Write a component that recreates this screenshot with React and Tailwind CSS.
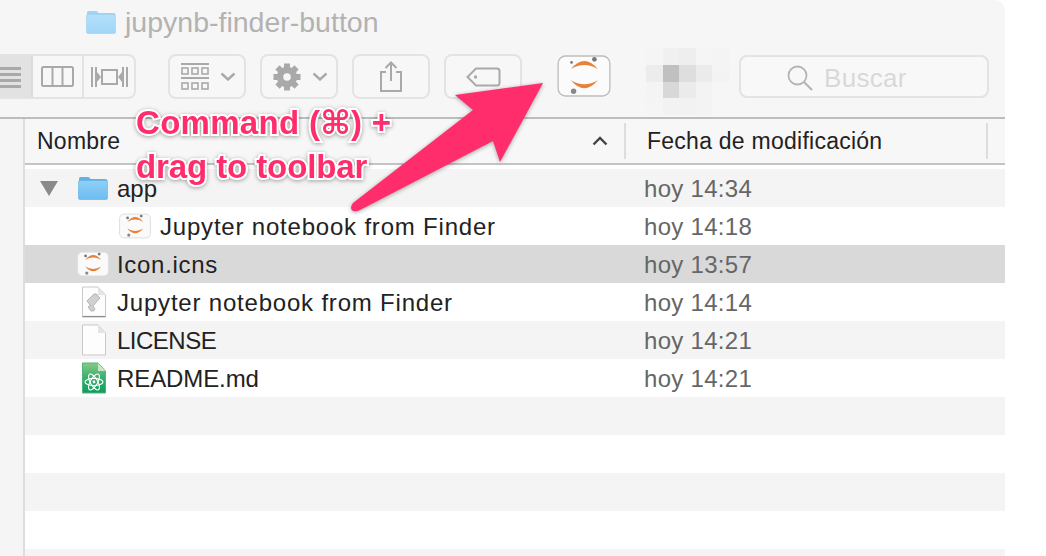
import React from 'react';

const font = { fontFamily: '"Liberation Sans", "DejaVu Sans", sans-serif' };

function Folder({ w, h, pale }) {
  const id = pale ? 'folderPale' : 'folderBlue';
  return (
    <svg width={w} height={h} viewBox="0 0 30 24">
      <defs>
        <linearGradient id={id} x1="0" y1="0" x2="0" y2="1">
          <stop offset="0" stopColor={pale ? '#b4e0fb' : '#8fd0f8'} />
          <stop offset="1" stopColor={pale ? '#a0d6f8' : '#6cbcf0'} />
        </linearGradient>
      </defs>
      <path d="M1 5V2.5Q1 1 2.5 1H10Q11.5 1 12.5 3H27.5Q29.5 3 29.5 5V5Z" fill={pale ? '#9fd3f5' : '#62b2ea'} />
      <rect x="0.5" y="4.5" width="29" height="19" rx="1.5" fill={`url(#${id})`} stroke={pale ? '#9ccff0' : '#5fade4'} strokeWidth="0.6" />
    </svg>
  );
}

function JupyterIcon({ w, h, strong }) {
  return (
    <svg width={w} height={h} viewBox="0 0 160 125" className="block">
      <rect x="3" y="3" width="154" height="119" rx="22" fill={strong ? '#fbfbfb' : '#fafafa'} stroke={strong ? '#bdbdbd' : '#dedede'} strokeWidth={strong ? 4 : 5} />
      <path d="M41 42Q81 -6 121 42Q81 18 41 42Z" fill="#e8823a" />
      <path d="M41 75Q81 123 121 75Q81 99 41 75Z" fill="#e8823a" />
      <circle cx="43" cy="22" r={strong ? 4 : 7} fill="#777" />
      <circle cx="111" cy="13" r="7" fill="#777" />
      <circle cx="49" cy="108" r="8" fill="#888" />
    </svg>
  );
}

function Page({ fill = '#fdfdfd', fold = '#e4e4e4', stroke = '#c9c9c9', children }) {
  return (
    <svg width="26" height="32" viewBox="0 0 26 32" className="block">
      <defs>
        <linearGradient id="pageGreen" x1="0" y1="0" x2="0" y2="1">
          <stop offset="0" stopColor="#86cb86" />
          <stop offset="0.45" stopColor="#3fb071" />
          <stop offset="1" stopColor="#0f9c5f" />
        </linearGradient>
      </defs>
      <path d="M1.5 1H17L24.5 9V31H1.5Z" fill={fill} stroke={stroke} strokeWidth="1" />
      <path d="M17 1L24.5 9H17Z" fill={fold} />
      {children}
    </svg>
  );
}

function ScriptDoc() {
  return (
    <Page>
      <path d="M6 15L13 8Q16 7 17 10L19 12L12 20L14 23Q13 26 10 25L7 21Q9 19 10 20Z" fill="#d0d0d0" stroke="#a8a8a8" strokeWidth="0.8" />
      <path d="M1.5 30.5H24.5" stroke="#8f8f8f" strokeWidth="1.2" />
    </Page>
  );
}

function AtomDoc() {
  return (
    <Page fill="url(#pageGreen)" fold="#c4e6c6" stroke="#4fb577">
      <g fill="none" stroke="#fff" strokeWidth="1.1">
        <ellipse cx="13" cy="20" rx="9" ry="3.6" />
        <ellipse cx="13" cy="20" rx="9" ry="3.6" transform="rotate(60 13 20)" />
        <ellipse cx="13" cy="20" rx="9" ry="3.6" transform="rotate(120 13 20)" />
      </g>
      <circle cx="13" cy="20" r="1.4" fill="#fff" />
    </Page>
  );
}

function Chevron() {
  return (
    <svg width="16" height="9" viewBox="0 0 16 9">
      <path d="M1.5 1.5L8 7.5L14.5 1.5" fill="none" stroke="#a9a9a9" strokeWidth="2.4" />
    </svg>
  );
}

function Gear() {
  const teeth = [0, 45, 90, 135, 180, 225, 270, 315];
  return (
    <svg width="28" height="28" viewBox="0 0 28 28">
      {teeth.map(a => (
        <rect key={a} x="11" y="0.5" width="6" height="7" fill="#a9a9a9" transform={`rotate(${a} 14 14)`} />
      ))}
      <circle cx="14" cy="14" r="7" fill="none" stroke="#a9a9a9" strokeWidth="6.5" />
    </svg>
  );
}

function ToolButton({ children, extra = '' }) {
  return (
    <div className={`w-[78px] h-[45px] shrink-0 flex items-center justify-center gap-[11px] rounded-[8px] border-2 border-[#e3e3e3] bg-[#f7f7f7] ${extra}`}>
      {children}
    </div>
  );
}

const mosaic = [
  'bg-[#f5f5f5]', 'bg-[#f0f0f0]', 'bg-[#eeeeee]', 'bg-[#f5f5f5]', 'bg-[#f4f4f4]',
  'bg-[#ececec]', 'bg-[#c0c0c0]', 'bg-[#dedede]', 'bg-[#ebebeb]', 'bg-[#f3f3f3]',
  'bg-[#f4f4f4]', 'bg-[#d8d8d8]', 'bg-[#ebebeb]', 'bg-[#f3f3f3]', 'bg-[#f6f6f6]',
  'bg-[#f5f5f5]', 'bg-[#f2f2f2]', 'bg-[#f2f2f2]', 'bg-[#f3f3f3]', 'bg-[#f6f6f6]',
];

const rows = [
  { name: 'app', date: 'hoy 14:34', bg: 'bg-[#f4f4f4]', pad: 'pl-[53px] gap-[9px]', icon: <Folder w={30} h={24} />, open: true },
  { name: 'Jupyter notebook from Finder', date: 'hoy 14:18', bg: 'bg-white', pad: 'pl-[94px] gap-[9px]', track: 'tracking-[0.8px]', icon: <JupyterIcon w={32} h={26} /> },
  { name: 'Icon.icns', date: 'hoy 13:57', bg: 'bg-[#d9d9d9]', pad: 'pl-[52px] gap-[8px]', track: 'tracking-[0.7px]', icon: <JupyterIcon w={32} h={26} /> },
  { name: 'Jupyter notebook from Finder', date: 'hoy 14:14', bg: 'bg-white', pad: 'pl-[56px] gap-[10px]', track: 'tracking-[0.8px]', icon: <ScriptDoc /> },
  { name: 'LICENSE', date: 'hoy 14:21', bg: 'bg-[#f4f4f4]', pad: 'pl-[56px] gap-[10px]', track: 'tracking-[-0.5px]', icon: <Page /> },
  { name: 'README.md', date: 'hoy 14:21', bg: 'bg-white', pad: 'pl-[56px] gap-[10px]', track: 'tracking-[-0.1px]', icon: <AtomDoc /> },
  { bg: 'bg-[#f4f4f4]' },
  { bg: 'bg-white' },
  { bg: 'bg-[#f4f4f4]' },
  { bg: 'bg-white' },
  { bg: 'bg-[#f4f4f4]' },
];

export default function App() {
  return (
    <div className="relative w-[1046px] h-[556px] overflow-hidden bg-white" style={font}>
      <div className="w-[1005px] h-[556px] flex flex-col overflow-hidden rounded-tr-[10px] bg-[#f6f6f6]">
        {/* barra de titulo + toolbar */}
        <div className="h-[119px] shrink-0 border-b-2 border-[#bdbdbd]">
          <div className="h-[54px] pl-[86px] flex items-start pt-[10px] gap-[9px]">
            <Folder w={30} h={24} pale />
            <span className="text-[28.5px] leading-[24px] text-[#b2b2b2]">jupynb-finder-button</span>
          </div>
          <div className="flex items-start">
            <div className="w-[136px] h-[45px] shrink-0 flex rounded-r-[8px] border-2 border-l-0 border-[#e3e3e3] bg-[#f7f7f7] overflow-hidden">
              <div className="w-[33px] bg-[#e2e2e2] border-r-2 border-[#dcdcdc] flex flex-col gap-[3px] pt-[11px]">
                <div className="w-[21px] h-[3px] bg-[#a9a9a9]" />
                <div className="w-[21px] h-[3px] bg-[#a9a9a9]" />
                <div className="w-[21px] h-[3px] bg-[#a9a9a9]" />
                <div className="w-[21px] h-[3px] bg-[#a9a9a9]" />
              </div>
              <div className="w-[51px] border-r-2 border-[#e3e3e3] flex items-center justify-center">
                <svg width="33" height="21" viewBox="0 0 33 21">
                  <rect x="1" y="1" width="31" height="19" rx="1.5" fill="none" stroke="#a9a9a9" strokeWidth="2" />
                  <path d="M11.5 1V20M21.5 1V20" stroke="#a9a9a9" strokeWidth="2" />
                </svg>
              </div>
              <div className="flex-1 flex items-center justify-center">
                <svg width="37" height="22" viewBox="0 0 37 22">
                  <path d="M1 1V21M5 1V21M32 1V21M36 1V21" stroke="#a9a9a9" strokeWidth="2" />
                  <path d="M6 6L10 11L6 16ZM31 6L27 11L31 16Z" fill="#a9a9a9" />
                  <rect x="11" y="4" width="15" height="14" fill="none" stroke="#a9a9a9" strokeWidth="2" />
                </svg>
              </div>
            </div>
            <div className="w-[32px] shrink-0" />
            <ToolButton extra="pl-[2px]">
              <svg width="28" height="27" viewBox="0 0 28 27">
                <path d="M0 1H28M0 15H28" stroke="#a9a9a9" strokeWidth="2" />
                <g fill="none" stroke="#a9a9a9" strokeWidth="1.6">
                  <rect x="1" y="5" width="6" height="6" />
                  <rect x="11" y="5" width="6" height="6" />
                  <rect x="21" y="5" width="6" height="6" />
                  <rect x="1" y="20" width="6" height="6" />
                  <rect x="11" y="20" width="6" height="6" />
                  <rect x="21" y="20" width="6" height="6" />
                </g>
              </svg>
              <Chevron />
            </ToolButton>
            <div className="w-[14px] shrink-0" />
            <ToolButton extra="pl-[2px]">
              <Gear />
              <Chevron />
            </ToolButton>
            <div className="w-[14px] shrink-0" />
            <ToolButton>
              <svg width="24" height="31" viewBox="0 0 24 31">
                <path d="M7 11H2V30H22V11H17" fill="none" stroke="#a9a9a9" strokeWidth="2" />
                <path d="M12 20V2M6.5 7L12 1.5L17.5 7" fill="none" stroke="#a9a9a9" strokeWidth="2" />
              </svg>
            </ToolButton>
            <div className="w-[14px] shrink-0" />
            <ToolButton>
              <svg width="35" height="20" viewBox="0 0 35 20">
                <path d="M10 1.5H31Q33.5 1.5 33.5 4V16Q33.5 18.5 31 18.5H10L1.5 10Z" fill="none" stroke="#a9a9a9" strokeWidth="2" />
                <circle cx="9.5" cy="10" r="1.7" fill="#a9a9a9" />
              </svg>
            </ToolButton>
            <div className="w-[35px] shrink-0" />
            <div className="shrink-0 pt-px">
              <JupyterIcon w={54} h={42} strong />
            </div>
            <div className="w-[35px] shrink-0" />
            <div className="w-[83px] h-[67px] shrink-0 -mt-[6px] grid grid-cols-5 grid-rows-4">
              {mosaic.map((c, i) => <div key={i} className={c} />)}
            </div>
            <div className="w-[10px] shrink-0" />
            <div className="w-[250px] h-[43px] mt-px shrink-0 flex items-center pl-[46px] pt-[2px] gap-[11px] rounded-[8px] border-2 border-[#e3e3e3] bg-[#f8f8f8]">
              <svg width="26" height="26" viewBox="0 0 26 26">
                <circle cx="10.5" cy="10.5" r="9" fill="none" stroke="#b4b4b4" strokeWidth="1.8" />
                <path d="M17 17L25 25" stroke="#b4b4b4" strokeWidth="2.2" />
              </svg>
              <span className="text-[26px] leading-none tracking-[0.3px] text-[#d8d8d8]">Buscar</span>
            </div>
          </div>
        </div>

        <div className="flex-1 flex min-h-0">
          <div className="w-[23px] shrink-0 bg-[#f5f5f5] border-r-2 border-[#dddddd] box-content" />
          <div className="flex-1 flex flex-col min-w-0">
            {/* cabecera de columnas */}
            <div className="h-[44px] shrink-0 flex items-center bg-[#f7f7f7] border-b-2 border-[#c4c4c4] box-content text-[23px] tracking-[0.25px] text-[#222]">
              <div className="w-[571px] h-[36px] flex items-center justify-between pl-[12px] pr-[16px] border-r-2 border-[#dddddd] box-content">
                <span>Nombre</span>
                <svg width="16" height="10" viewBox="0 0 16 10">
                  <path d="M1.5 8.5L8 2L14.5 8.5" fill="none" stroke="#444" strokeWidth="2.4" />
                </svg>
              </div>
              <div className="w-[339px] h-[36px] flex items-center pl-[21px] border-r-2 border-[#dddddd] box-content">
                <span>Fecha de modificación</span>
              </div>
            </div>
            <div className="h-[4px] shrink-0 bg-white" />
            {rows.map((r, i) => (
              <div key={i} className={`relative h-[38px] shrink-0 flex items-center text-[24px] text-[#222] ${r.bg}`}>
                {r.open && (
                  <div className="absolute left-[15px] top-[12px] w-0 h-0 border-x-[9px] border-x-transparent border-t-[15px] border-t-[#8a8a8a]" />
                )}
                {r.name && (
                  <>
                    <div className={`w-[619px] shrink-0 flex items-center ${r.pad}`}>
                      {r.icon}
                      <span className={`pt-px ${r.track || ''}`}>{r.name}</span>
                    </div>
                    <span className="pt-px text-[#666] tracking-[0.3px]">{r.date}</span>
                  </>
                )}
              </div>
            ))}
          </div>
        </div>
      </div>

      {/* flecha y rotulo encima de la captura */}
      <svg width="1046" height="556" viewBox="0 0 1046 556" className="absolute left-0 top-0 drop-shadow-[0_1px_2px_rgba(0,0,0,0.35)]">
        <path d="M543 83L455 95L473 110L353 203Q349 208 353 211Q356 212 360 210L493 141L500 162Z" fill="#ff2d6b" />
      </svg>
      <div className="absolute left-[136px] top-[101px] text-[33px] leading-[44px] font-bold text-[#ff2d6b] whitespace-nowrap [-webkit-text-stroke:4px_white] [paint-order:stroke_fill] drop-shadow-[0_1px_2px_rgba(0,0,0,0.35)]">
        <div className="tracking-[0.3px]">Command (⌘) +</div>
        <div className="tracking-[-0.1px]">drag to toolbar</div>
      </div>
    </div>
  );
}
